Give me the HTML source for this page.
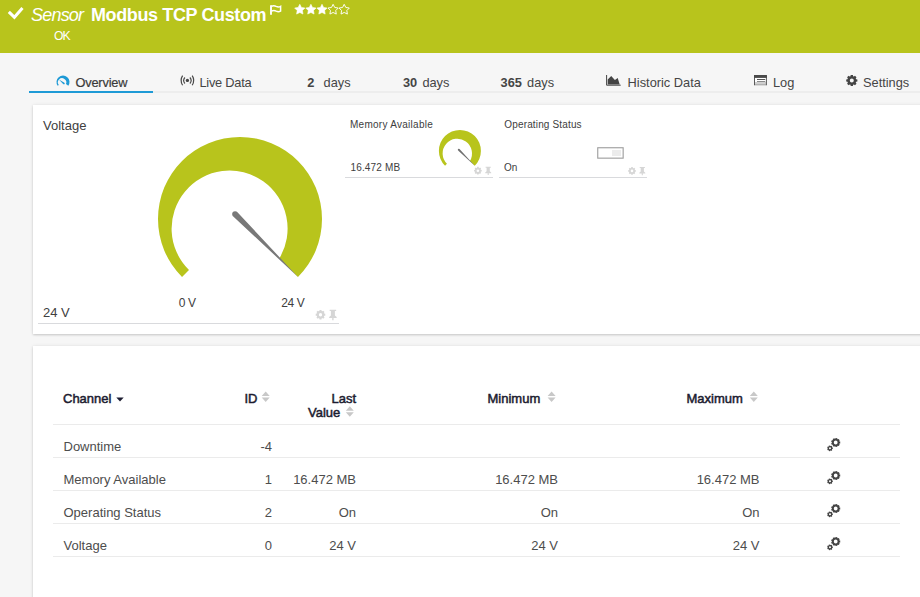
<!DOCTYPE html>
<html><head><meta charset="utf-8">
<style>
html,body{margin:0;padding:0;}
body{width:920px;height:597px;overflow:hidden;background:#f6f6f6;font-family:"Liberation Sans",sans-serif;position:relative;color:#333;}
.t{position:absolute;white-space:nowrap;line-height:1;}
#hdr{position:absolute;left:0;top:0;width:920px;height:53px;background:#b8c41c;}
.panel{position:absolute;background:#fff;box-shadow:0 1px 2px rgba(0,0,0,0.16),0 0 4px rgba(0,0,0,0.07);}
.tab{position:absolute;top:77px;font-size:12.8px;line-height:1;color:#454545;white-space:nowrap;}
.th{position:absolute;font-size:13px;line-height:1;font-weight:normal;color:#1c1c30;white-space:nowrap;-webkit-text-stroke:0.5px #1c1c30;}
.td{position:absolute;font-size:13px;line-height:1;color:#4d4d4d;white-space:nowrap;}
.r{text-align:right;}
.hl{position:absolute;height:1px;background:#ebebeb;}
svg{position:absolute;left:0;top:0;}
</style></head><body>
<div id="hdr"></div>
<div class="t" style="left:31px;top:5.8px;font-size:18px;font-style:italic;color:#fff;letter-spacing:-0.8px;">Sensor</div>
<div class="t" style="left:91px;top:5.8px;font-size:18px;font-weight:bold;color:#fff;letter-spacing:-0.38px;">Modbus TCP Custom</div>
<div class="t" style="left:54px;top:29.6px;font-size:12.2px;color:#fff;letter-spacing:-1px;">OK</div>

<div class="tab" style="left:75.5px;letter-spacing:-0.2px;color:#3a3a3a;-webkit-text-stroke:0.2px #3a3a3a;">Overview</div>
<div class="tab" style="left:199.5px;letter-spacing:-0.25px;">Live Data</div>
<div class="tab" style="left:307.3px;font-weight:bold;">2</div><div class="tab" style="left:323.6px;">days</div>
<div class="tab" style="left:403px;font-weight:bold;">30</div><div class="tab" style="left:422.4px;">days</div>
<div class="tab" style="left:500.6px;font-weight:bold;">365</div><div class="tab" style="left:527.1px;">days</div>
<div class="tab" style="left:627.6px;">Historic Data</div>
<div class="tab" style="left:773px;">Log</div>
<div class="tab" style="left:863px;">Settings</div>
<div class="hl" style="left:29px;top:91px;width:891px;height:2px;background:#ededed;"></div>
<div class="t" style="left:29px;top:91px;width:124px;height:2px;background:#1e9ad6;"></div>

<div class="panel" style="left:33px;top:105px;width:900px;height:229px;"></div>
<div class="panel" style="left:33px;top:346px;width:900px;height:270px;"></div>

<!-- panel 1 texts -->
<div class="t" style="left:43px;top:118.7px;font-size:13px;color:#404040;">Voltage</div>
<div class="t" style="left:43px;top:306px;font-size:13px;color:#404040;">24 V</div>
<div class="t" style="left:178.8px;top:297px;font-size:12px;letter-spacing:-0.4px;color:#404040;">0 V</div>
<div class="t" style="left:281.2px;top:297px;font-size:12px;letter-spacing:-0.4px;color:#404040;">24 V</div>
<div class="hl" style="left:38px;top:323px;width:301px;background:#d9dadd;"></div>

<div class="t" style="left:350px;top:119.5px;font-size:10px;letter-spacing:0.27px;color:#404040;">Memory Available</div>
<div class="t" style="left:350.5px;top:162.5px;font-size:10px;letter-spacing:0.15px;color:#404040;">16.472 MB</div>
<div class="hl" style="left:345px;top:177px;width:148px;background:#d9dadd;"></div>
<div class="t" style="left:504.3px;top:119.5px;font-size:10px;letter-spacing:0.15px;color:#404040;">Operating Status</div>
<div class="t" style="left:504px;top:162.5px;font-size:10px;color:#404040;">On</div>
<div class="hl" style="left:499px;top:177px;width:148px;background:#d9dadd;"></div>

<!-- table -->
<div class="th" style="left:63px;top:391.6px;">Channel</div>
<div class="th" style="left:244.5px;top:391.6px;">ID</div>
<div class="th" style="left:331.5px;top:391.6px;">Last</div>
<div class="th" style="left:308px;top:406.1px;">Value</div>
<div class="th" style="left:487.5px;top:391.6px;">Minimum</div>
<div class="th" style="left:686.5px;top:391.6px;">Maximum</div>
<div class="hl" style="left:53px;top:424px;width:847px;"></div>
<div class="td" style="left:63.5px;top:440px;">Downtime</div>
<div class="td r" style="right:648px;top:440px;">-4</div>
<div class="hl" style="left:53px;top:457px;width:847px;"></div>
<div class="td" style="left:63.5px;top:473px;">Memory Available</div>
<div class="td r" style="right:648px;top:473px;">1</div>
<div class="td r" style="right:564px;top:473px;">16.472 MB</div>
<div class="td r" style="right:362px;top:473px;">16.472 MB</div>
<div class="td r" style="right:160.5px;top:473px;">16.472 MB</div>
<div class="hl" style="left:53px;top:490px;width:847px;"></div>
<div class="td" style="left:63.5px;top:506px;">Operating Status</div>
<div class="td r" style="right:648px;top:506px;">2</div>
<div class="td r" style="right:564px;top:506px;">On</div>
<div class="td r" style="right:362px;top:506px;">On</div>
<div class="td r" style="right:160.5px;top:506px;">On</div>
<div class="hl" style="left:53px;top:523px;width:847px;"></div>
<div class="td" style="left:63.5px;top:539px;">Voltage</div>
<div class="td r" style="right:648px;top:539px;">0</div>
<div class="td r" style="right:564px;top:539px;">24 V</div>
<div class="td r" style="right:362px;top:539px;">24 V</div>
<div class="td r" style="right:160.5px;top:539px;">24 V</div>
<div class="hl" style="left:53px;top:556px;width:847px;"></div>

<svg width="920" height="597" viewBox="0 0 920 597">
  <!-- header check -->
  <path d="M9.9 12.9 L14.4 17.3 L21.5 9.1" fill="none" stroke="#fff" stroke-width="3" stroke-linecap="square"/>
  <!-- flag -->
  <path d="M271 5.2 V14.7" stroke="#fff" stroke-width="1.9"/><path d="M271.5 6.2 Q274 5.2 276.2 6.4 Q278.4 7.5 280.6 6.3 V11.1 Q278.4 12.2 276.2 11.1 Q274 9.9 271.5 11" fill="none" stroke="#fff" stroke-width="1.5"/>
  <path d="M299.80 4.30 L301.42 7.48 L304.94 8.03 L302.42 10.55 L302.97 14.07 L299.80 12.45 L296.63 14.07 L297.18 10.55 L294.66 8.03 L298.18 7.48 Z" fill="#fff" stroke="#fff" stroke-width="0.6" stroke-linejoin="miter"/><path d="M310.90 4.30 L312.52 7.48 L316.04 8.03 L313.52 10.55 L314.07 14.07 L310.90 12.45 L307.73 14.07 L308.28 10.55 L305.76 8.03 L309.28 7.48 Z" fill="#fff" stroke="#fff" stroke-width="0.6" stroke-linejoin="miter"/><path d="M322.00 4.30 L323.62 7.48 L327.14 8.03 L324.62 10.55 L325.17 14.07 L322.00 12.45 L318.83 14.07 L319.38 10.55 L316.86 8.03 L320.38 7.48 Z" fill="#fff" stroke="#fff" stroke-width="0.6" stroke-linejoin="miter"/><path d="M333.10 4.30 L334.72 7.48 L338.24 8.03 L335.72 10.55 L336.27 14.07 L333.10 12.45 L329.93 14.07 L330.48 10.55 L327.96 8.03 L331.48 7.48 Z" fill="none" stroke="#fff" stroke-width="0.95" stroke-linejoin="miter"/><path d="M344.20 4.30 L345.82 7.48 L349.34 8.03 L346.82 10.55 L347.37 14.07 L344.20 12.45 L341.03 14.07 L341.58 10.55 L339.06 8.03 L342.58 7.48 Z" fill="none" stroke="#fff" stroke-width="0.95" stroke-linejoin="miter"/>
  <!-- overview icon -->
  <path d="M57.68 85.73 A6.5 6.5 0 1 1 68.32 85.73 L65.95 84.07 A4.2 4.2 0 1 0 58.77 84.96 Z" fill="#1e9ad6"/>
  <path d="M64.42 82.83 L58.90 79.60 L63.38 84.17 Z M64.75 83.50 A0.85 0.85 0 1 0 63.05 83.50 A0.85 0.85 0 1 0 64.75 83.50 Z" fill="#1e9ad6"/>
  <!-- live data -->
  <circle cx="187.4" cy="80.4" r="1.65" fill="#444"/>
  <path d="M184.9 77.5 A4.6 4.6 0 0 0 184.9 83.5 M189.9 77.5 A4.6 4.6 0 0 1 189.9 83.5" fill="none" stroke="#4a4a4a" stroke-width="1.2"/>
  <path d="M182.6 75.6 A9 9 0 0 0 182.6 85.2 M192.2 75.6 A9 9 0 0 1 192.2 85.2" fill="none" stroke="#4a4a4a" stroke-width="1.2"/>
  <!-- historic data -->
  <path d="M606.6 75 V85.2 H620.7" fill="none" stroke="#444" stroke-width="1.0"/>
  <path d="M607.7 84.4 L607.7 79.6 L611.2 75.9 L614.9 80.1 L617.7 78.1 L619.7 84.4 Z" fill="#444"/>
  <!-- log -->
  <rect x="755" y="78" width="11" height="6.5" fill="#fff"/>
  <rect x="755" y="82" width="11" height="2.4" fill="#cfcfcf"/>
  <path d="M757 79.5 H765.2" stroke="#555" stroke-width="1"/>
  <path d="M757 81.5 H765.2" stroke="#8a8a8a" stroke-width="1"/>
  <path d="M754.5 75.5 V85.3 M766.4 75.5 V85.3" stroke="#5a5a5a" stroke-width="1"/>
  <path d="M755 84.8 H766" stroke="#9a9a9a" stroke-width="1"/>
  <rect x="754" y="75" width="12.9" height="2.9" fill="#4a4a4a"/>
  <!-- settings -->
  <path d="M857.39 79.39 L857.39 81.61 L856.11 81.79 L855.76 82.64 L856.54 83.67 L854.97 85.24 L853.94 84.46 L853.09 84.81 L852.91 86.09 L850.69 86.09 L850.51 84.81 L849.66 84.46 L848.63 85.24 L847.06 83.67 L847.84 82.64 L847.49 81.79 L846.21 81.61 L846.21 79.39 L847.49 79.21 L847.84 78.36 L847.06 77.33 L848.63 75.76 L849.66 76.54 L850.51 76.19 L850.69 74.91 L852.91 74.91 L853.09 76.19 L853.94 76.54 L854.97 75.76 L856.54 77.33 L855.76 78.36 L856.11 79.21 Z M853.80 80.50 A2.0 2.0 0 1 0 849.80 80.50 A2.0 2.0 0 1 0 853.80 80.50 Z" fill="#444" fill-rule="evenodd"/>

  <!-- big gauge -->
  <path d="M182.02 276.98 A82 82 0 1 1 297.98 276.98 L279.37 258.37 A58 58 0 1 0 188.99 270.01 Z" fill="#b8c41c"/>
  <path d="M233.01 216.19 L297.98 276.98 L237.19 212.01 Z M238.05 214.10 A2.95 2.95 0 1 0 232.15 214.10 A2.95 2.95 0 1 0 238.05 214.10 Z" fill="#787878"/>
  <path d="M325.28 313.75 L325.28 315.65 L324.21 315.81 L323.91 316.54 L324.55 317.41 L323.21 318.75 L322.34 318.11 L321.61 318.41 L321.45 319.48 L319.55 319.48 L319.39 318.41 L318.66 318.11 L317.79 318.75 L316.45 317.41 L317.09 316.54 L316.79 315.81 L315.72 315.65 L315.72 313.75 L316.79 313.59 L317.09 312.86 L316.45 311.99 L317.79 310.65 L318.66 311.29 L319.39 310.99 L319.55 309.92 L321.45 309.92 L321.61 310.99 L322.34 311.29 L323.21 310.65 L324.55 311.99 L323.91 312.86 L324.21 313.59 Z M322.12 314.70 A1.625 1.625 0 1 0 318.88 314.70 A1.625 1.625 0 1 0 322.12 314.70 Z" fill="#d6d6d6" fill-rule="evenodd"/><path d="M329.65 309.82 H336.15 V310.95 H334.90 V315.45 L336.65 316.95 V317.95 H333.59 V320.20 H332.21 V317.95 H329.15 V316.95 L330.90 315.45 V310.95 H329.65 Z" fill="#d6d6d6"/>
  <!-- small gauge -->
  <path d="M445.05 165.75 A21 21 0 1 1 474.75 165.75 L469.93 160.93 A14.7 14.7 0 1 0 446.96 163.84 Z" fill="#b8c41c"/>
  <path d="M458.09 150.51 L474.75 165.75 L459.51 149.09 Z M459.80 149.80 A1.0 1.0 0 1 0 457.80 149.80 A1.0 1.0 0 1 0 459.80 149.80 Z" fill="#707070"/>
  <path d="M481.73 169.94 L481.73 171.46 L480.87 171.59 L480.63 172.17 L481.14 172.87 L480.07 173.94 L479.37 173.43 L478.79 173.67 L478.66 174.53 L477.14 174.53 L477.01 173.67 L476.43 173.43 L475.73 173.94 L474.66 172.87 L475.17 172.17 L474.93 171.59 L474.07 171.46 L474.07 169.94 L474.93 169.81 L475.17 169.23 L474.66 168.53 L475.73 167.46 L476.43 167.97 L477.01 167.73 L477.14 166.87 L478.66 166.87 L478.79 167.73 L479.37 167.97 L480.07 167.46 L481.14 168.53 L480.63 169.23 L480.87 169.81 Z M479.20 170.70 A1.3 1.3 0 1 0 476.60 170.70 A1.3 1.3 0 1 0 479.20 170.70 Z" fill="#d6d6d6" fill-rule="evenodd"/><path d="M485.60 166.80 H490.80 V167.70 H489.80 V171.30 L491.20 172.50 V173.30 H488.75 V175.10 H487.65 V173.30 H485.20 V172.50 L486.60 171.30 V167.70 H485.60 Z" fill="#d6d6d6"/>
  <!-- toggle -->
  <rect x="597.75" y="147.75" width="25.4" height="10.4" fill="#fff" stroke="#9c9c9c" stroke-width="1.1"/>
  <rect x="612" y="150" width="9" height="6" fill="#ececec"/>
  <path d="M635.83 170.14 L635.83 171.66 L634.97 171.79 L634.73 172.37 L635.24 173.07 L634.17 174.14 L633.47 173.63 L632.89 173.87 L632.76 174.73 L631.24 174.73 L631.11 173.87 L630.53 173.63 L629.83 174.14 L628.76 173.07 L629.27 172.37 L629.03 171.79 L628.17 171.66 L628.17 170.14 L629.03 170.01 L629.27 169.43 L628.76 168.73 L629.83 167.66 L630.53 168.17 L631.11 167.93 L631.24 167.07 L632.76 167.07 L632.89 167.93 L633.47 168.17 L634.17 167.66 L635.24 168.73 L634.73 169.43 L634.97 170.01 Z M633.30 170.90 A1.3 1.3 0 1 0 630.70 170.90 A1.3 1.3 0 1 0 633.30 170.90 Z" fill="#d6d6d6" fill-rule="evenodd"/><path d="M639.70 167.00 H644.90 V167.90 H643.90 V171.50 L645.30 172.70 V173.50 H642.85 V175.30 H641.75 V173.50 H639.30 V172.70 L640.70 171.50 V167.90 H639.70 Z" fill="#d6d6d6"/>
  <!-- table sort -->
  <path d="M116.3 397.6 L123.7 397.6 L120 401.6 Z" fill="#1c1c30"/>
  <path d="M261.7 396.0 L265.7 391.4 L269.7 396.0 Z M261.7 397.4 L269.7 397.4 L265.7 402.0 Z" fill="#c8c8c8"/>
  <path d="M345.8 410.8 L349.8 406.2 L353.8 410.8 Z M345.8 412.2 L353.8 412.2 L349.8 416.8 Z" fill="#c8c8c8"/>
  <path d="M547.6 396.0 L551.6 391.4 L555.6 396.0 Z M547.6 397.4 L555.6 397.4 L551.6 402.0 Z" fill="#c8c8c8"/>
  <path d="M749.8 396.0 L753.8 391.4 L757.8 396.0 Z M749.8 397.4 L757.8 397.4 L753.8 402.0 Z" fill="#c8c8c8"/>
  <path d="M840.22 441.62 L840.22 443.38 L839.36 443.53 L839.17 444.06 L839.72 444.73 L838.59 446.07 L837.84 445.64 L837.35 445.92 L837.35 446.79 L835.62 447.10 L835.32 446.28 L834.77 446.18 L834.20 446.85 L832.68 445.97 L832.98 445.15 L832.62 444.72 L831.76 444.87 L831.16 443.22 L831.91 442.78 L831.91 442.22 L831.16 441.78 L831.76 440.13 L832.62 440.28 L832.98 439.85 L832.68 439.03 L834.20 438.15 L834.77 438.82 L835.32 438.72 L835.62 437.90 L837.35 438.21 L837.35 439.08 L837.84 439.36 L838.59 438.93 L839.72 440.27 L839.17 440.94 L839.36 441.47 Z M837.60 442.50 A1.9 1.9 0 1 0 833.80 442.50 A1.9 1.9 0 1 0 837.60 442.50 Z" fill="#444" fill-rule="evenodd"/><path d="M832.81 447.59 L832.81 449.01 L832.16 449.10 L831.97 449.49 L832.31 450.06 L831.20 450.94 L830.72 450.48 L830.30 450.58 L830.07 451.20 L828.68 450.88 L828.74 450.23 L828.40 449.96 L827.77 450.16 L827.16 448.88 L827.71 448.52 L827.71 448.08 L827.16 447.72 L827.77 446.44 L828.40 446.64 L828.74 446.37 L828.68 445.72 L830.07 445.40 L830.30 446.02 L830.72 446.12 L831.20 445.66 L832.31 446.54 L831.97 447.11 L832.16 447.50 Z M831.00 448.30 A1.0 1.0 0 1 0 829.00 448.30 A1.0 1.0 0 1 0 831.00 448.30 Z" fill="#444" fill-rule="evenodd"/><path d="M840.22 474.62 L840.22 476.38 L839.36 476.53 L839.17 477.06 L839.72 477.73 L838.59 479.07 L837.84 478.64 L837.35 478.92 L837.35 479.79 L835.62 480.10 L835.32 479.28 L834.77 479.18 L834.20 479.85 L832.68 478.97 L832.98 478.15 L832.62 477.72 L831.76 477.87 L831.16 476.22 L831.91 475.78 L831.91 475.22 L831.16 474.78 L831.76 473.13 L832.62 473.28 L832.98 472.85 L832.68 472.03 L834.20 471.15 L834.77 471.82 L835.32 471.72 L835.62 470.90 L837.35 471.21 L837.35 472.08 L837.84 472.36 L838.59 471.93 L839.72 473.27 L839.17 473.94 L839.36 474.47 Z M837.60 475.50 A1.9 1.9 0 1 0 833.80 475.50 A1.9 1.9 0 1 0 837.60 475.50 Z" fill="#444" fill-rule="evenodd"/><path d="M832.81 480.59 L832.81 482.01 L832.16 482.10 L831.97 482.49 L832.31 483.06 L831.20 483.94 L830.72 483.48 L830.30 483.58 L830.07 484.20 L828.68 483.88 L828.74 483.23 L828.40 482.96 L827.77 483.16 L827.16 481.88 L827.71 481.52 L827.71 481.08 L827.16 480.72 L827.77 479.44 L828.40 479.64 L828.74 479.37 L828.68 478.72 L830.07 478.40 L830.30 479.02 L830.72 479.12 L831.20 478.66 L832.31 479.54 L831.97 480.11 L832.16 480.50 Z M831.00 481.30 A1.0 1.0 0 1 0 829.00 481.30 A1.0 1.0 0 1 0 831.00 481.30 Z" fill="#444" fill-rule="evenodd"/><path d="M840.22 507.62 L840.22 509.38 L839.36 509.53 L839.17 510.06 L839.72 510.73 L838.59 512.07 L837.84 511.64 L837.35 511.92 L837.35 512.79 L835.62 513.10 L835.32 512.28 L834.77 512.18 L834.20 512.85 L832.68 511.97 L832.98 511.15 L832.62 510.72 L831.76 510.87 L831.16 509.22 L831.91 508.78 L831.91 508.22 L831.16 507.78 L831.76 506.13 L832.62 506.28 L832.98 505.85 L832.68 505.03 L834.20 504.15 L834.77 504.82 L835.32 504.72 L835.62 503.90 L837.35 504.21 L837.35 505.08 L837.84 505.36 L838.59 504.93 L839.72 506.27 L839.17 506.94 L839.36 507.47 Z M837.60 508.50 A1.9 1.9 0 1 0 833.80 508.50 A1.9 1.9 0 1 0 837.60 508.50 Z" fill="#444" fill-rule="evenodd"/><path d="M832.81 513.59 L832.81 515.01 L832.16 515.10 L831.97 515.49 L832.31 516.06 L831.20 516.94 L830.72 516.48 L830.30 516.58 L830.07 517.20 L828.68 516.88 L828.74 516.23 L828.40 515.96 L827.77 516.16 L827.16 514.88 L827.71 514.52 L827.71 514.08 L827.16 513.72 L827.77 512.44 L828.40 512.64 L828.74 512.37 L828.68 511.72 L830.07 511.40 L830.30 512.02 L830.72 512.12 L831.20 511.66 L832.31 512.54 L831.97 513.11 L832.16 513.50 Z M831.00 514.30 A1.0 1.0 0 1 0 829.00 514.30 A1.0 1.0 0 1 0 831.00 514.30 Z" fill="#444" fill-rule="evenodd"/><path d="M840.22 540.62 L840.22 542.38 L839.36 542.53 L839.17 543.06 L839.72 543.73 L838.59 545.07 L837.84 544.64 L837.35 544.92 L837.35 545.79 L835.62 546.10 L835.32 545.28 L834.77 545.18 L834.20 545.85 L832.68 544.97 L832.98 544.15 L832.62 543.72 L831.76 543.87 L831.16 542.22 L831.91 541.78 L831.91 541.22 L831.16 540.78 L831.76 539.13 L832.62 539.28 L832.98 538.85 L832.68 538.03 L834.20 537.15 L834.77 537.82 L835.32 537.72 L835.62 536.90 L837.35 537.21 L837.35 538.08 L837.84 538.36 L838.59 537.93 L839.72 539.27 L839.17 539.94 L839.36 540.47 Z M837.60 541.50 A1.9 1.9 0 1 0 833.80 541.50 A1.9 1.9 0 1 0 837.60 541.50 Z" fill="#444" fill-rule="evenodd"/><path d="M832.81 546.59 L832.81 548.01 L832.16 548.10 L831.97 548.49 L832.31 549.06 L831.20 549.94 L830.72 549.48 L830.30 549.58 L830.07 550.20 L828.68 549.88 L828.74 549.23 L828.40 548.96 L827.77 549.16 L827.16 547.88 L827.71 547.52 L827.71 547.08 L827.16 546.72 L827.77 545.44 L828.40 545.64 L828.74 545.37 L828.68 544.72 L830.07 544.40 L830.30 545.02 L830.72 545.12 L831.20 544.66 L832.31 545.54 L831.97 546.11 L832.16 546.50 Z M831.00 547.30 A1.0 1.0 0 1 0 829.00 547.30 A1.0 1.0 0 1 0 831.00 547.30 Z" fill="#444" fill-rule="evenodd"/>
</svg>
</body></html>
